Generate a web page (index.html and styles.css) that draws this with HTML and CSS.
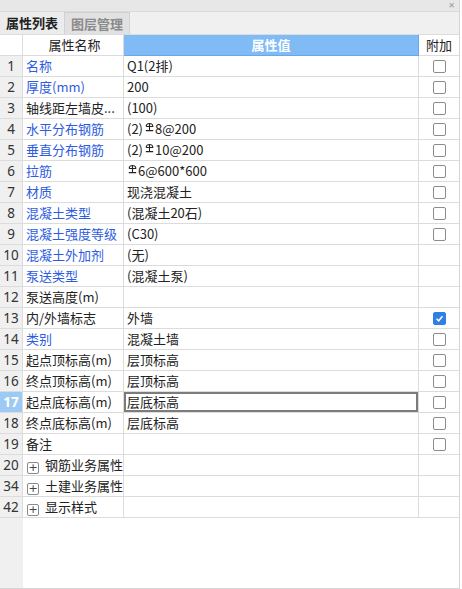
FILE: index.html
```html
<!DOCTYPE html>
<html lang="zh-CN">
<head>
  <meta charset="UTF-8">
  <title>属性列表</title>
  <link rel="stylesheet" href="styles.css">
</head>
<body>
<div class="panel">
  <div class="topbar"><span class="close">✕</span></div>
  <div class="tabs">
    <div class="tab active">属性列表</div>
    <div class="tab">图层管理</div>
  </div>

  <div class="grid">
    <div class="row head">
      <div class="num"></div>
      <div class="name center">属性名称</div>
      <div class="val hilite">属性值</div>
      <div class="add">附加</div>
    </div>

    <div class="row"><div class="num">1</div><div class="name blue">名称</div><div class="val">Q1(2排)</div><div class="add"><span class="cb"></span></div></div>
    <div class="row"><div class="num">2</div><div class="name blue">厚度(mm)</div><div class="val">200</div><div class="add"><span class="cb"></span></div></div>
    <div class="row"><div class="num">3</div><div class="name">轴线距左墙皮...</div><div class="val">(100)</div><div class="add"><span class="cb"></span></div></div>
    <div class="row"><div class="num">4</div><div class="name blue">水平分布钢筋</div><div class="val">(2)<svg class="bar" viewBox="0 0 9 10"><path d="M1.2 4.5 A3.3 3 0 0 1 7.8 4.5 H1.2 M4.5 1 V8.6 M0.8 8.6 H8.2" /></svg>8@200</div><div class="add"><span class="cb"></span></div></div>
    <div class="row"><div class="num">5</div><div class="name blue">垂直分布钢筋</div><div class="val">(2)<svg class="bar" viewBox="0 0 9 10"><path d="M1.2 4.5 A3.3 3 0 0 1 7.8 4.5 H1.2 M4.5 1 V8.6 M0.8 8.6 H8.2" /></svg>10@200</div><div class="add"><span class="cb"></span></div></div>
    <div class="row"><div class="num">6</div><div class="name blue">拉筋</div><div class="val"><svg class="bar first" viewBox="0 0 9 10"><path d="M1.2 4.5 A3.3 3 0 0 1 7.8 4.5 H1.2 M4.5 1 V8.6 M0.8 8.6 H8.2" /></svg>6@600*600</div><div class="add"><span class="cb"></span></div></div>
    <div class="row"><div class="num">7</div><div class="name blue">材质</div><div class="val">现浇混凝土</div><div class="add"><span class="cb"></span></div></div>
    <div class="row"><div class="num">8</div><div class="name blue">混凝土类型</div><div class="val">(混凝土20石)</div><div class="add"><span class="cb"></span></div></div>
    <div class="row"><div class="num">9</div><div class="name blue">混凝土强度等级</div><div class="val">(C30)</div><div class="add"><span class="cb"></span></div></div>
    <div class="row"><div class="num">10</div><div class="name blue">混凝土外加剂</div><div class="val">(无)</div><div class="add"></div></div>
    <div class="row"><div class="num">11</div><div class="name blue">泵送类型</div><div class="val">(混凝土泵)</div><div class="add"></div></div>
    <div class="row"><div class="num">12</div><div class="name">泵送高度(m)</div><div class="val"></div><div class="add"></div></div>
    <div class="row"><div class="num">13</div><div class="name">内/外墙标志</div><div class="val">外墙</div><div class="add"><span class="cb on"><svg viewBox="0 0 13 13"><path d="M3 6.8 L5.5 9.2 L10 3.8" /></svg></span></div></div>
    <div class="row"><div class="num">14</div><div class="name blue">类别</div><div class="val">混凝土墙</div><div class="add"><span class="cb"></span></div></div>
    <div class="row"><div class="num">15</div><div class="name">起点顶标高(m)</div><div class="val">层顶标高</div><div class="add"><span class="cb"></span></div></div>
    <div class="row"><div class="num">16</div><div class="name">终点顶标高(m)</div><div class="val">层顶标高</div><div class="add"><span class="cb"></span></div></div>
    <div class="row current"><div class="num">17</div><div class="name">起点底标高(m)</div><div class="val editing">层底标高</div><div class="add"><span class="cb"></span></div></div>
    <div class="row"><div class="num">18</div><div class="name">终点底标高(m)</div><div class="val">层底标高</div><div class="add"><span class="cb"></span></div></div>
    <div class="row"><div class="num">19</div><div class="name">备注</div><div class="val"></div><div class="add"><span class="cb"></span></div></div>
    <div class="row"><div class="num">20</div><div class="name"><span class="plus">+</span>钢筋业务属性</div><div class="val"></div><div class="add"></div></div>
    <div class="row"><div class="num">34</div><div class="name"><span class="plus">+</span>土建业务属性</div><div class="val"></div><div class="add"></div></div>
    <div class="row"><div class="num">42</div><div class="name"><span class="plus">+</span>显示样式</div><div class="val"></div><div class="add"></div></div>
  </div>
  <div class="filler"></div>
</div>
</body>
</html>
```

FILE: styles.css
```css
* { box-sizing: border-box; }
body { margin: 0; font-family: "Noto Sans CJK SC", "Noto Sans", sans-serif; font-size: 13px; color: #222; background: #fff; }

.panel { width: 460px; height: 589px; display: flex; flex-direction: column; border-right: 1px solid #d6d6d6; border-bottom: 1px solid #d6d6d6; }

.topbar { height: 12px; background: #e7e7e7; border-bottom: 1px solid #dadada; display: flex; justify-content: flex-end; align-items: center; }
.close { font-family: "DejaVu Sans", sans-serif; font-size: 8px; line-height: 9px; color: #9a9a9a; padding-right: 4px; }

.tabs { height: 23px; background: #f0f0f0; display: flex; border-bottom: 1px solid #dcdcdc; }
.tab { width: 65px; line-height: 22px; text-align: center; color: #8a8a8a; font-weight: bold; background: #e1e1e1; border-right: 1px solid #d2d2d2; border-top: 1px solid #d2d2d2; }
.tab.active { color: #222; background: #ececec; border-top: none; }

.grid { display: flex; flex-direction: column; }
.row { display: grid; grid-template-columns: 23px 101px 295px 40px; height: 21px; }
.row > div { border-right: 1px solid #dcdcdc; border-bottom: 1px solid #dcdcdc; line-height: 20px; white-space: nowrap; overflow: hidden; }
.row > .add { border-right: none; display: flex; align-items: center; justify-content: center; }

.num { background: #f0f0f0; text-align: center; color: #333; font-family: "Noto Sans", sans-serif; font-size: 13.5px; }
.name { padding-left: 3px; }
.val { padding-left: 3px; display: flex; align-items: center; }
.blue { color: #2d5ce0; }
.center { text-align: center; }

.head > div { background: #fff; }
.head .val.hilite { background: #80bbf6; color: #fff; font-weight: bold; justify-content: center; padding-left: 0; border-right-color: #6aa6e8; border-bottom-color: #6aa6e8; }
.head .add { color: #222; }

.current .num { background: #9ccaf4; color: #fff; font-weight: bold; }
.val.editing { box-shadow: inset 0 0 0 2px #7c7c7c; }

.bar { width: 9px; height: 10px; margin: -5px 1px 0 2px; fill: none; stroke: #222; stroke-width: 1.1; }
.bar.first { margin-left: 1px; }

.cb { width: 13px; height: 13px; border: 1px solid #8c8c8c; border-radius: 2px; background: #fff; display: block; margin-left: 1px; }
.cb.on { background: #2f7fe4; border-color: #2f7fe4; }
.cb svg { width: 11px; height: 11px; display: block; fill: none; stroke: #fff; stroke-width: 1.8; }

.plus { display: inline-block; width: 12px; height: 12px; border: 1px solid #8a8a8a; border-radius: 2px; line-height: 9px; text-align: center; font-size: 11px; font-family: "DejaVu Sans", sans-serif; color: #444; margin: 0 6px 0 1px; vertical-align: -1px; }

.filler { flex: 1; background: linear-gradient(to right, #f0f0f0 0, #f0f0f0 23px, #fff 23px); }
```
